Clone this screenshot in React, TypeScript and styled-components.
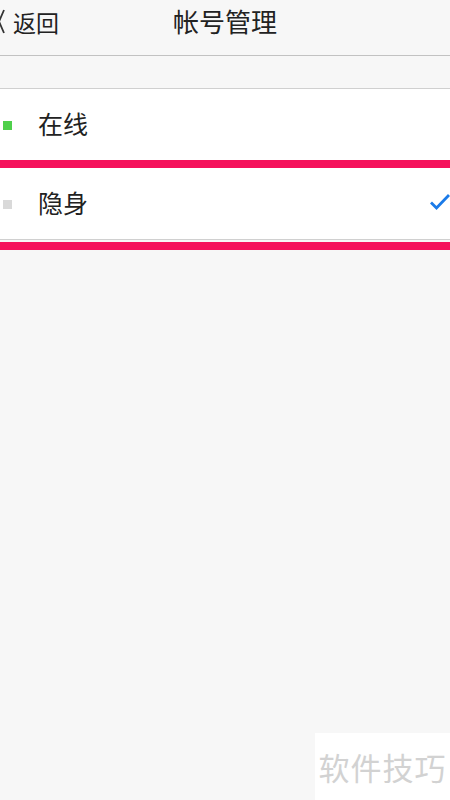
import styled, { createGlobalStyle } from "styled-components";

const GlobalStyle = createGlobalStyle`
  html, body {
    margin: 0;
    padding: 0;
    background: #f7f7f7;
  }
  body {
    font-family: "Noto Sans CJK SC", "Noto Sans", sans-serif;
  }
`;

interface Status {
  label: string;
  color: string;
  selected: boolean;
}

const STATUSES: Status[] = [
  { label: "在线", color: "#4fd04b", selected: false },
  { label: "隐身", color: "#d9d9d9", selected: true },
];

const App: React.FC = () => {
  return (
    <Page>
      <GlobalStyle />
      <NavBar>
        <BackButton>
          <svg width="8" height="25" viewBox="0 0 8 25">
            <path d="M6 1 L1 12.5 L6 24" fill="none" stroke="#333" strokeWidth="1.8" />
          </svg>
          <BackLabel>返回</BackLabel>
        </BackButton>
        <Title>帐号管理</Title>
      </NavBar>
      <Spacer />
      <List>
        {STATUSES.map((status, index) => (
          <div key={status.label}>
            <Row>
              <Dot $color={status.color} />
              <RowLabel>{status.label}</RowLabel>
              {status.selected && (
                <Check>
                  <svg width="21" height="17" viewBox="0 0 21 17">
                    <path d="M2 9.5 L7.5 15 L20 2" fill="none" stroke="#1a7ae8" strokeWidth="2.8" />
                  </svg>
                </Check>
              )}
            </Row>
            {index === 0 && <Highlight />}
          </div>
        ))}
      </List>
      <Highlight $gap />
      <Watermark>软件技巧</Watermark>
    </Page>
  );
};
export default App;

const Page = styled.div`
  position: relative;
  width: 450px;
  height: 800px;
  background: #f7f7f7;
  overflow: hidden;
`;

const NavBar = styled.div`
  position: relative;
  height: 56px;
  display: flex;
  align-items: center;
  justify-content: center;
  border-bottom: solid 1px #c2c2c2;
  box-sizing: border-box;
`;

const BackButton = styled.div`
  position: absolute;
  left: -2px;
  top: 9px;
  display: flex;
  align-items: center;
  gap: 7px;
`;

const BackLabel = styled.div`
  font-size: 23px;
  color: #222;
  line-height: 24px;
`;

const Title = styled.div`
  font-size: 26px;
  color: #222;
  margin-top: -14px;
`;

const Spacer = styled.div`
  height: 32px;
`;

const List = styled.div`
  background: #fff;
  border-top: solid 1px #d0d0d0;
  border-bottom: solid 1px #d0d0d0;
`;

const Row = styled.div`
  display: flex;
  align-items: center;
  height: 71px;
  padding-left: 3px;
`;

const Dot = styled.div<{ $color: string }>`
  width: 9px;
  height: 9px;
  background: ${(p) => p.$color};
  margin-top: 2px;
`;

const RowLabel = styled.div`
  flex: 1;
  margin-left: 26px;
  margin-top: -3px;
  font-size: 25px;
  color: #222;
`;

const Check = styled.div`
  display: flex;
  margin-right: 0;
  margin-top: -4px;
`;

const Highlight = styled.div<{ $gap?: boolean }>`
  height: 8px;
  background: #f5125c;
  margin-top: ${(p) => (p.$gap ? "2px" : "0")};
`;

const Watermark = styled.div`
  position: absolute;
  right: 0;
  bottom: 0;
  width: 135px;
  height: 67px;
  background: #fff;
  color: #d2d2d2;
  font-size: 31px;
  display: flex;
  align-items: center;
  justify-content: center;
  letter-spacing: 1px;
`;
